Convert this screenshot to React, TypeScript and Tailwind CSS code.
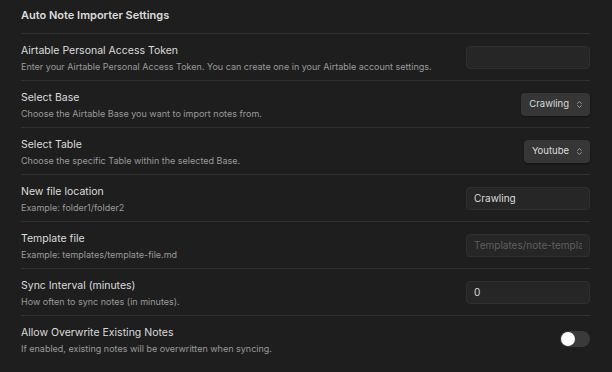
import React from 'react';
import { ChevronsUpDown } from 'lucide-react';

type Setting = {
  name: string;
  desc: string;
  control: React.ReactNode;
};

const TextInput = ({ value, placeholder }: { value?: string; placeholder?: string }) => (
  <input
    type="text"
    defaultValue={value}
    placeholder={placeholder}
    className="w-[124px] h-[23px] rounded-[4px] bg-[#262626] border border-[#303030] px-[7px] text-[10px] text-[#dcdcdc] placeholder:text-[#5f5f5f] outline-none"
  />
);

const Dropdown = ({ value }: { value: string }) => (
  <div className="flex items-center gap-[6px] h-[23px] rounded-[4px] bg-[#363636] pl-[8px] pr-[6px] text-[9.5px] text-[#dcdcdc] shadow-[0_1px_2px_rgba(0,0,0,0.4)]">
    <span>{value}</span>
    <ChevronsUpDown size={9} strokeWidth={2} className="text-[#bbb]" />
  </div>
);

const Toggle = () => (
  <div className="w-[30px] h-[16px] rounded-full bg-[#3a3a3a] flex items-center px-[1px]">
    <div className="w-[14px] h-[14px] rounded-full bg-white" />
  </div>
);

export default function App() {
  const settings: Setting[] = [
    {
      name: 'Airtable Personal Access Token',
      desc: 'Enter your Airtable Personal Access Token. You can create one in your Airtable account settings.',
      control: <TextInput />,
    },
    {
      name: 'Select Base',
      desc: 'Choose the Airtable Base you want to import notes from.',
      control: <Dropdown value="Crawling" />,
    },
    {
      name: 'Select Table',
      desc: 'Choose the specific Table within the selected Base.',
      control: <Dropdown value="Youtube" />,
    },
    {
      name: 'New file location',
      desc: 'Example: folder1/folder2',
      control: <TextInput value="Crawling" />,
    },
    {
      name: 'Template file',
      desc: 'Example: templates/template-file.md',
      control: <TextInput placeholder="Templates/note-template.md" />,
    },
    {
      name: 'Sync Interval (minutes)',
      desc: 'How often to sync notes (in minutes).',
      control: <TextInput value="0" />,
    },
    {
      name: 'Allow Overwrite Existing Notes',
      desc: 'If enabled, existing notes will be overwritten when syncing.',
      control: <Toggle />,
    },
  ];

  return (
    <div
      className="w-[612px] h-[372px] overflow-hidden bg-[#1e1e1e] pl-[21px] pr-[22px]"
      style={{ fontFamily: 'Inter, "Noto Sans", sans-serif' }}
    >
      <div className="h-[33px] flex items-center pb-[3px] text-[11px] font-semibold text-[#dcdcdc]">
        Auto Note Importer Settings
      </div>
      {settings.map((s) => (
        <div
          key={s.name}
          className="h-[47px] flex items-center justify-between border-t border-[#313131]"
        >
          <div className="flex flex-col gap-[3px] pt-[1px]">
            <div className="text-[10.5px] leading-[15px] text-[#dcdcdc]">{s.name}</div>
            <div className="text-[9px] leading-[12px] text-[#9a9a9a]">{s.desc}</div>
          </div>
          {s.control}
        </div>
      ))}
    </div>
  );
}
